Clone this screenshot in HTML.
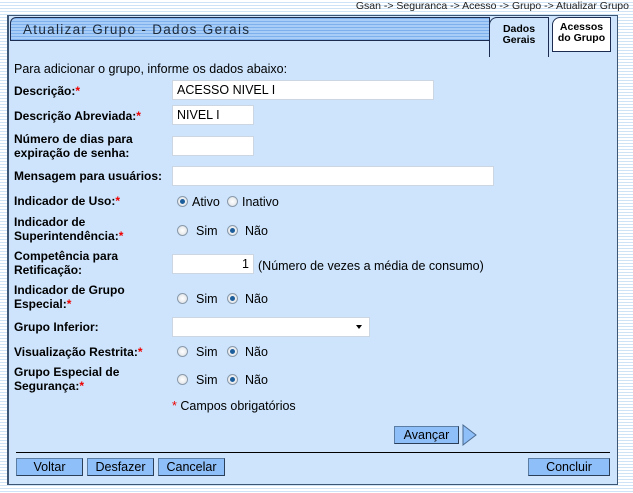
<!DOCTYPE html>
<html><head><style>
body{margin:0;width:633px;height:493px;overflow:hidden;font-family:"Liberation Sans",sans-serif;font-size:12.5px;
background:repeating-linear-gradient(#ffffff 0 2px,#cfe3f6 2px 3px);position:relative}
.a{position:absolute}
.panel{left:7px;top:15px;width:608px;height:468px;background:#cde4fc;border:1px solid #3d5673;border-left:2px solid #3d5673}
.hdr{left:10px;top:17px;width:478px;height:22px;border:1px solid #1b2c50;background:repeating-linear-gradient(#7fb0ee 0 1px,#a8cdf6 1px 3px);border-top-left-radius:6px}
.hdr span{position:absolute;left:12px;top:4px;font-size:13.5px;letter-spacing:1.3px;color:#1d2a3a}
.tab{font-family:"Liberation Sans",sans-serif;font-weight:bold;font-size:10.5px;text-align:center;line-height:11px;border:1px solid #1b2c50;border-bottom:none;border-top-left-radius:8px}
.lb{font-weight:bold;color:#000;left:14px;line-height:14px;font-size:12px}
.r{color:#e00}
.in{background:#fff;border:1px solid #cbd6e2;height:20px;box-sizing:border-box;font-size:12.5px;padding:2px 4px}
.rad{width:11px;height:11px;border-radius:50%;border:1px solid #8a9aab;background:radial-gradient(#fff,#d8dde2);box-sizing:border-box}
.rad.on::after{content:"";position:absolute;left:2px;top:2px;width:5px;height:5px;border-radius:50%;background:#1c5d9c}
.btn{background:#8fbff8;border:1px solid #5c7da3;border-right-color:#2b3f58;border-bottom-color:#2b3f58;height:18px;box-sizing:border-box;text-align:center;font-size:12.5px;line-height:16px}
</style></head><body>
<div class="a" style="right:4px;top:0;font-size:10.5px;color:#222">Gsan -&gt; Seguranca -&gt; Acesso -&gt; Grupo -&gt; Atualizar Grupo</div>
<div class="a panel"></div>
<div class="a hdr"><span>Atualizar Grupo - Dados Gerais</span></div>
<div class="a tab" style="left:489px;top:17px;width:60px;height:40px;background:#cde4fc;padding-top:6px;box-sizing:border-box">Dados<br>Gerais</div>
<div class="a tab" style="left:552px;top:17px;width:59px;height:35px;background:#fff;border-bottom:1px solid #1b2c50;padding-top:4px;box-sizing:border-box">Acessos<br>do Grupo</div>
<div class="a" style="left:14px;top:62px">Para adicionar o grupo, informe os dados abaixo:</div>

<div class="a lb" style="top:84px">Descrição:<span class="r">*</span></div>
<div class="a in" style="left:172px;top:80px;width:262px">ACESSO NIVEL I</div>
<div class="a lb" style="top:109px">Descrição Abreviada:<span class="r">*</span></div>
<div class="a in" style="left:172px;top:105px;width:82px">NIVEL I</div>
<div class="a lb" style="top:132px">Número de dias para<br>expiração de senha:</div>
<div class="a in" style="left:172px;top:136px;width:82px"></div>
<div class="a lb" style="top:169px">Mensagem para usuários:</div>
<div class="a in" style="left:172px;top:166px;width:322px"></div>

<div class="a lb" style="top:194px">Indicador de Uso:<span class="r">*</span></div>
<div class="a rad on" style="left:177px;top:196px"></div><div class="a" style="left:192px;top:195px">Ativo</div>
<div class="a rad" style="left:227px;top:196px"></div><div class="a" style="left:242px;top:195px">Inativo</div>

<div class="a lb" style="top:215px">Indicador de<br>Superintendência:<span class="r">*</span></div>
<div class="a rad" style="left:177px;top:225px"></div><div class="a" style="left:196px;top:224px">Sim</div>
<div class="a rad on" style="left:227px;top:225px"></div><div class="a" style="left:245px;top:224px">Não</div>

<div class="a lb" style="top:249px">Competência para<br>Retificação:</div>
<div class="a in" style="left:172px;top:254px;width:82px;text-align:right">1</div>
<div class="a" style="left:258px;top:259px">(Número de vezes a média de consumo)</div>

<div class="a lb" style="top:283px">Indicador de Grupo<br>Especial:<span class="r">*</span></div>
<div class="a rad" style="left:177px;top:293px"></div><div class="a" style="left:196px;top:292px">Sim</div>
<div class="a rad on" style="left:227px;top:293px"></div><div class="a" style="left:245px;top:292px">Não</div>

<div class="a lb" style="top:320px">Grupo Inferior:</div>
<div class="a in" style="left:172px;top:317px;width:198px"></div>
<div class="a" style="left:356px;top:325px;width:0;height:0;border-left:3.5px solid transparent;border-right:3.5px solid transparent;border-top:4px solid #000"></div>

<div class="a lb" style="top:345px">Visualização Restrita:<span class="r">*</span></div>
<div class="a rad" style="left:177px;top:346px"></div><div class="a" style="left:196px;top:345px">Sim</div>
<div class="a rad on" style="left:227px;top:346px"></div><div class="a" style="left:245px;top:345px">Não</div>

<div class="a lb" style="top:365px">Grupo Especial de<br>Segurança:<span class="r">*</span></div>
<div class="a rad" style="left:177px;top:374px"></div><div class="a" style="left:196px;top:373px">Sim</div>
<div class="a rad on" style="left:227px;top:374px"></div><div class="a" style="left:245px;top:373px">Não</div>

<div class="a" style="left:172px;top:399px"><span class="r">*</span> Campos obrigatórios</div>

<div class="a btn" style="left:394px;top:426px;width:65px">Avançar</div>
<svg class="a" style="left:462px;top:424px" width="16" height="22"><path d="M1 1 L14 11 L1 21 Z" fill="#8fbff8" stroke="#4a6a90"/></svg>
<div class="a" style="left:16px;top:452px;width:594px;height:1px;background:#000"></div>
<div class="a btn" style="left:16px;top:458px;width:67px">Voltar</div>
<div class="a btn" style="left:87px;top:458px;width:67px">Desfazer</div>
<div class="a btn" style="left:158px;top:458px;width:67px">Cancelar</div>
<div class="a btn" style="left:528px;top:458px;width:82px">Concluir</div>
</body></html>
